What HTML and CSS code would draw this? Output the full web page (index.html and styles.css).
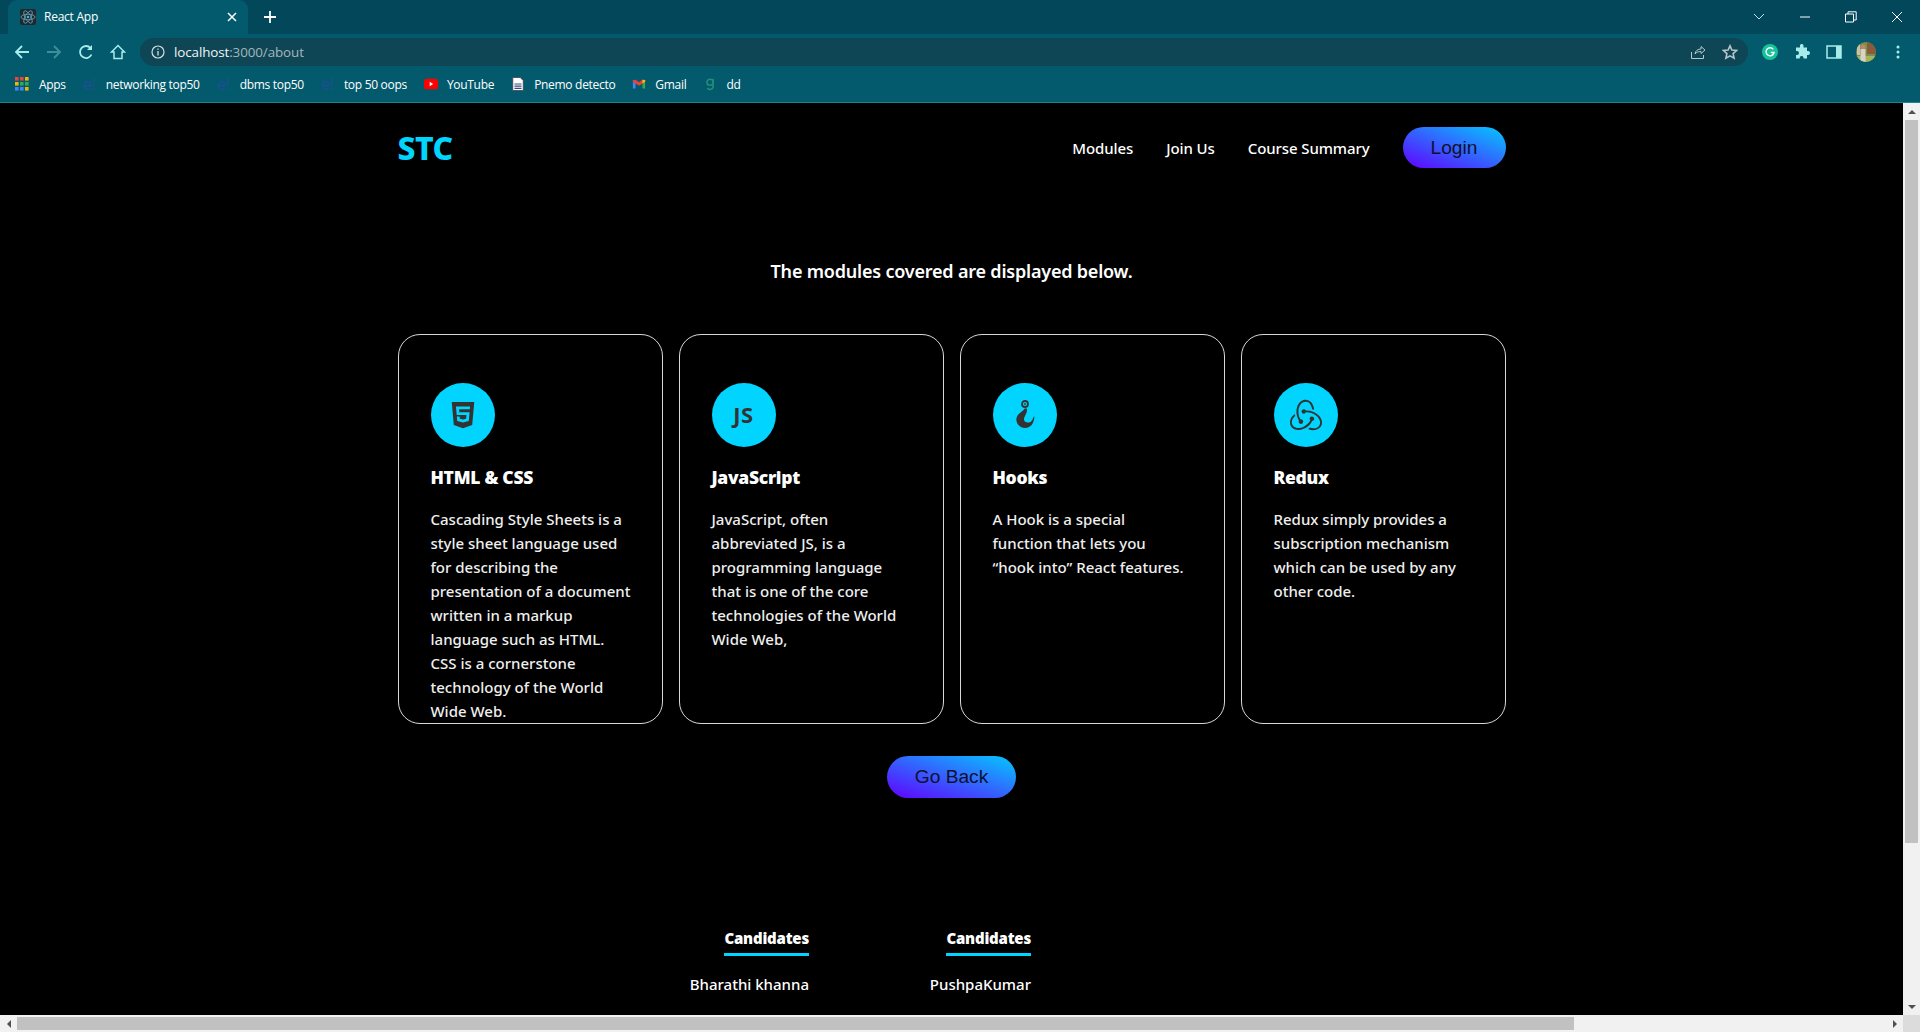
FILE: index.html
```html
<!DOCTYPE html>
<html lang="en">
<head>
<meta charset="utf-8">
<title>React App</title>
<link rel="stylesheet" href="styles.css">
</head>
<body>
<header class="browser">
  <div class="tabstrip">
    <div class="tab">
      <svg class="favicon" viewBox="0 0 16 16"><rect width="16" height="16" rx="2" fill="#20282c"/><g fill="none" stroke="#61a8c4" stroke-width=".8"><ellipse cx="8" cy="8" rx="7" ry="2.8"/><ellipse cx="8" cy="8" rx="7" ry="2.8" transform="rotate(60 8 8)"/><ellipse cx="8" cy="8" rx="7" ry="2.8" transform="rotate(120 8 8)"/></g><circle cx="8" cy="8" r="1.3" fill="#61a8c4"/></svg>
      <span class="tab-title">React App</span>
      <svg class="tab-close" viewBox="0 0 10 10"><path d="M1 1l8 8M9 1l-8 8" stroke="#fff" stroke-width="1.5"/></svg>
    </div>
    <svg class="new-tab" viewBox="0 0 12 12"><path d="M6 0v12M0 6h12" stroke="#fff" stroke-width="1.8"/></svg>
    <div class="window-controls">
      <svg class="wc chevron" viewBox="0 0 12 8"><path d="M1 1l5 5 5-5" fill="none" stroke="#c8dde2" stroke-width="1"/></svg>
      <svg class="wc" viewBox="0 0 12 12"><path d="M1 6h10" stroke="#fff" stroke-width="1"/></svg>
      <svg class="wc" viewBox="0 0 12 12"><path d="M.5 3h8v8h-8zM3 3V.8h8.2V9H8.500" fill="none" stroke="#fff" stroke-width="1"/></svg>
      <svg class="wc" viewBox="0 0 12 12"><path d="M1 1l10 10M11 1L1 11" stroke="#fff" stroke-width="1"/></svg>
    </div>
  </div>
  <div class="toolbar">
    <div class="nav-icons">
      <svg class="tool" viewBox="0 0 16 16"><path d="M15 8H2M8 2L2 8l6 6" fill="none" stroke="#a8ecea" stroke-width="1.8"/></svg>
      <svg class="tool" viewBox="0 0 16 16"><path d="M1 8h13M8 2l6 6-6 6" fill="none" stroke="#3f8f9b" stroke-width="1.8"/></svg>
      <svg class="tool" viewBox="0 0 16 16"><path d="M13.500 10.500A6 6 0 1 1 12.500 4" fill="none" stroke="#a8ecea" stroke-width="1.8"/><path d="M14 1v5H9z" fill="#a8ecea"/></svg>
      <svg class="tool" viewBox="0 0 16 16"><path d="M8 1.500L1.500 8H4v6.500h8V8h2.500z" fill="none" stroke="#a8ecea" stroke-width="1.500"/></svg>
    </div>
    <div class="omnibox">
      <svg class="info" viewBox="0 0 14 14"><circle cx="7" cy="7" r="6" fill="none" stroke="#d6dfe2" stroke-width="1.200"/><path d="M7 6v4.500M7 3.500v1.300" stroke="#d6dfe2" stroke-width="1.300"/></svg>
      <span class="url">localhost<span class="url-muted">:3000/about</span></span>
      <svg class="omni-right share" viewBox="0 0 16 16"><path d="M1.500 8v6.500h12V11M5 10c.5-3.500 3-5 6-5V2.500L15 6l-4 3.500V7.500C8.500 7.500 6.500 8 5 10z" fill="none" stroke="#b6c6ca" stroke-width="1"/></svg>
      <svg class="omni-right star" viewBox="0 0 16 16"><path d="M8 1.800l1.900 4.200 4.600.5-3.400 3.100 1 4.500L8 11.800 3.900 14.100l1-4.500L1.500 6.500 6.100 6z" fill="none" stroke="#b6c6ca" stroke-width="1.600"/></svg>
    </div>
    <div class="ext-icons">
      <svg class="tool" viewBox="0 0 16 16"><circle cx="8" cy="8" r="8" fill="#15c39a"/><path d="M11.300 5.400A4 4 0 1 0 12 8.500H8.800" fill="none" stroke="#fff" stroke-width="1.400"/></svg>
      <svg class="tool" viewBox="0 0 16 16"><path d="M6 1.500a1.800 1.800 0 0 1 3.500 0V3.500h3.500V7h1a2 2 0 0 1 0 4h-1v3.500H9.500v-1a1.900 1.900 0 0 0-3.700 0v1H2V11h1a2 2 0 0 0 0-4H2V3.500h4z" fill="#a8ecea"/></svg>
      <svg class="tool" viewBox="0 0 16 16"><path d="M1 2h14v12H1z" fill="none" stroke="#a8ecea" stroke-width="1.500"/><path d="M10 2h5v12h-5z" fill="#a8ecea"/></svg>
      <svg class="tool avatar" viewBox="0 0 20 20"><defs><clipPath id="av"><circle cx="10" cy="10" r="10"/></clipPath></defs><g clip-path="url(#av)"><rect width="20" height="20" fill="#7c8f4e"/><rect x="11" width="9" height="12" fill="#8b5a3a"/><rect y="14" width="20" height="6" fill="#a6b35e"/><circle cx="7" cy="5" r="2.500" fill="#b88a68"/><rect x="4.500" y="7" width="5" height="13" fill="#d9d3c6"/><rect x="1" width="3" height="13" fill="#c9c2a8"/></g></svg>
      <svg class="tool dots" viewBox="0 0 16 16"><circle cx="8" cy="3" r="1.500" fill="#a8ecea"/><circle cx="8" cy="8" r="1.500" fill="#a8ecea"/><circle cx="8" cy="13" r="1.500" fill="#a8ecea"/></svg>
    </div>
  </div>
  <nav class="bookmarks">
    <a class="bm bm-apps"><svg class="bm-icon" viewBox="0 0 14 14"><g><rect width="3.600" height="3.600" fill="#e8453c"/><rect x="5" width="3.600" height="3.600" fill="#e8453c"/><rect x="10" width="3.600" height="3.600" fill="#f4b400"/><rect y="5" width="3.600" height="3.600" fill="#f4b400"/><rect x="5" y="5" width="3.600" height="3.600" fill="#34a853"/><rect x="10" y="5" width="3.600" height="3.600" fill="#34a853"/><rect y="10" width="3.600" height="3.600" fill="#4285f4"/><rect x="5" y="10" width="3.600" height="3.600" fill="#4285f4"/><rect x="10" y="10" width="3.600" height="3.600" fill="#f4b400"/></g></svg>Apps</a>
    <a class="bm"><span class="bm-e">e!</span>networking top50</a>
    <a class="bm"><span class="bm-e">e!</span>dbms top50</a>
    <a class="bm"><span class="bm-e">e!</span>top 50 oops</a>
    <a class="bm"><svg class="bm-icon" viewBox="0 0 16 16"><rect y="2" width="16" height="12" rx="3" fill="#f00"/><path d="M6.500 5.500v5l4-2.500z" fill="#fff"/></svg>YouTube</a>
    <a class="bm"><svg class="bm-icon" viewBox="0 0 16 16"><path d="M2 .5h8.500L14 4v11.500H2z" fill="#fff" stroke="#445"/><path d="M4 8h8M4 10.500h8M4 13h8" stroke="#3a4a80" stroke-width="1.300"/></svg>Pnemo detecto</a>
    <a class="bm"><svg class="bm-icon" viewBox="0 0 16 16"><path d="M1 4v9h3V7z" fill="#4285f4"/><path d="M15 4v9h-3V7z" fill="#34a853"/><path d="M1 3.500L4 3l4 3 4-3 3 .5v2L8 10 1 5.500z" fill="#ea4335"/><path d="M12 3l3 .5v2l-3 2z" fill="#fbbc04"/></svg>Gmail</a>
    <a class="bm"><svg class="bm-icon" viewBox="0 0 16 16"><circle cx="8" cy="6" r="3.500" fill="none" stroke="#1f8f78" stroke-width="1.800"/><path d="M11.500 2v8.500a3.500 3.500 0 0 1-6.500 2" fill="none" stroke="#1f8f78" stroke-width="1.800"/></svg>dd</a>
  </nav>
</header>

<div class="window-body">
  <div class="viewport">
    <main class="page">
      <header class="site-nav">
        <div class="logo">STC</div>
        <ul class="nav-links">
          <li>Modules</li>
          <li>Join Us</li>
          <li>Course Summary</li>
        </ul>
        <button class="pill pill-login">Login</button>
      </header>

      <h2 class="lead">The modules covered are displayed below.</h2>

      <section class="cards">
        <article class="card">
          <div class="badge">
            <svg class="icon-html" viewBox="0 0 384 512"><path d="M0 32l34.900 395.800L191.500 480l157.600-52.200L384 32H0zm308.200 127.900H124.400l4.100 49.400h175.600l-13.600 148.400-97.900 27v.3h-1.100l-98.700-27.300-6-75.800h47.700L138 320l53.500 14.500 53.700-14.500 6-62.200H84.300L71.500 112.200h241.100l-4.400 47.700z"/></svg>
          </div>
          <h3 class="card-title">HTML &amp; CSS</h3>
          <p class="card-text">Cascading Style Sheets is a<br>style sheet language used<br>for describing the<br>presentation of a document<br>written in a markup<br>language such as HTML.<br>CSS is a cornerstone<br>technology of the World<br>Wide Web.</p>
        </article>
        <article class="card">
          <div class="badge"><span class="badge-js">JS</span></div>
          <h3 class="card-title">JavaScript</h3>
          <p class="card-text">JavaScript, often<br>abbreviated JS, is a<br>programming language<br>that is one of the core<br>technologies of the World<br>Wide Web,</p>
        </article>
        <article class="card">
          <div class="badge">
            <svg class="icon-hook" viewBox="0 0 20 30"><circle cx="10" cy="4" r="3" fill="none" stroke="#333" stroke-width="1.800"/><circle cx="10" cy="4" r=".9" fill="#333"/><path d="M9.500 8.500C9 11 3 12.500 1.500 18c-1 4.500 2.500 10 8.500 10 6 0 9-5 9.500-11.500l-1 .5c-.8 2.800-1.500 3.500-3 5-3 1.500-6.500 0-6.500-2.500 0-3.500 3.500-5.500 3-11z" fill="#333"/></svg>
          </div>
          <h3 class="card-title">Hooks</h3>
          <p class="card-text">A Hook is a special<br>function that lets you<br>“hook into” React features.</p>
        </article>
        <article class="card">
          <div class="badge">
            <svg class="icon-redux" viewBox="0 0 24 24"><path d="M16.634 16.504c.87-.075 1.543-.84 1.500-1.754-.047-.914-.796-1.648-1.709-1.648h-.061a1.710 1.710 0 00-1.648 1.769c.03.479.226.869.494 1.153-1.048 2.038-2.621 3.536-5.005 4.795-1.603.838-3.296 1.154-4.944.930-1.378-.195-2.456-.810-3.116-1.799-.988-1.499-1.078-3.116-.255-4.734.600-1.170 1.499-2.023 2.099-2.443a9.960 9.960 0 01-.420-1.543C-.868 14.408-.416 18.752.932 20.805c1.004 1.498 3.057 2.456 5.304 2.456.600 0 1.230-.044 1.843-.194 3.897-.749 6.848-3.086 8.541-6.532zm5.348-3.746c-2.320-2.728-5.738-4.226-9.634-4.226h-.510c-.253-.554-.837-.899-1.498-.899h-.045c-.943 0-1.678.810-1.647 1.753.03.898.794 1.648 1.708 1.648h.074a1.690 1.690 0 001.499-1.049h.555c2.309 0 4.495.674 6.488 1.992 1.527 1.005 2.622 2.323 3.237 3.897.538 1.288.509 2.547-.045 3.597-.855 1.647-2.294 2.517-4.196 2.517-1.199 0-2.367-.375-2.967-.644-.360.298-.960.793-1.394 1.093 1.318.598 2.652.943 3.940.943 2.922 0 5.094-1.647 5.919-3.236.898-1.798.824-4.824-1.470-7.416zM6.490 17.042c.03.899.793 1.648 1.708 1.648h.060a1.688 1.688 0 001.648-1.768c0-.900-.779-1.647-1.693-1.647h-.060c-.060 0-.150 0-.226.029-1.243-2.098-1.768-4.347-1.572-6.772.120-1.828.720-3.417 1.797-4.735.900-1.124 2.593-1.680 3.747-1.708 3.236-.061 4.585 3.971 4.689 5.574l1.498.450C17.741 3.197 14.686.620 11.764.620 9.020.620 6.490 2.613 5.470 5.535 4.077 9.430 4.991 13.177 6.700 16.174c-.150.195-.240.539-.210.868z"/></svg>
          </div>
          <h3 class="card-title">Redux</h3>
          <p class="card-text">Redux simply provides a<br>subscription mechanism<br>which can be used by any<br>other code.</p>
        </article>
      </section>

      <div class="back-row"><button class="pill pill-back">Go Back</button></div>

      <footer class="candidates">
        <div class="cand-col cand-a">
          <h4 class="cand-head">Candidates</h4>
          <p class="cand-name">Bharathi khanna</p>
        </div>
        <div class="cand-col cand-b">
          <h4 class="cand-head">Candidates</h4>
          <p class="cand-name">PushpaKumar</p>
        </div>
      </footer>
    </main>
  </div>
  <div class="vscroll">
    <span class="sb-btn"><i class="arrow arrow-up"></i></span>
    <span class="vthumb"></span>
    <span class="sb-fill"></span>
    <span class="sb-btn"><i class="arrow arrow-down"></i></span>
  </div>
</div>
<div class="hscroll">
  <span class="sb-btn"><i class="arrow arrow-left"></i></span>
  <span class="hthumb"></span>
  <span class="sb-fill"></span>
  <span class="sb-btn"><i class="arrow arrow-right"></i></span>
  <span class="sb-corner"></span>
</div>
</body>
</html>
```

FILE: styles.css
```css
* { box-sizing: border-box; }
html, body { margin: 0; height: 100%; }
body {
  display: flex;
  flex-direction: column;
  height: 100vh;
  overflow: hidden;
  background: #000;
  color: #fff;
  font-family: "Noto Sans", sans-serif;
}

/* browser chrome */
.browser {
  flex: none;
  height: 103px;
  background: #035a6d;
  border-bottom: 1px solid #1b8290;
  font-family: "Open Sans", sans-serif;
}
.tabstrip {
  display: flex;
  align-items: center;
  height: 34px;
  padding-left: 8px;
  background: #03475a;
}
.tab {
  display: flex;
  align-items: center;
  width: 240px;
  height: 34px;
  padding: 0 11px 0 12px;
  background: #035a6d;
  border-radius: 9px 9px 0 0;
}
.favicon { width: 16px; height: 16px; flex: none; }
.tab-title { flex: 1; margin: 0 0 2px 8px; font-size: 12px; letter-spacing: -.25px; color: #fff; }
.tab-close { width: 10px; height: 10px; flex: none; }
.new-tab { width: 12px; height: 12px; margin-left: 16px; flex: none; }
.window-controls {
  display: flex;
  align-items: center;
  gap: 34px;
  margin-left: auto;
  padding-right: 17px;
}
.wc { width: 12px; height: 12px; display: block; }
.toolbar {
  display: flex;
  align-items: center;
  height: 36px;
}
.nav-icons {
  display: flex;
  gap: 16px;
  padding-left: 14px;
}
.tool { width: 16px; height: 16px; display: block; flex: none; }
.omnibox {
  display: flex;
  align-items: center;
  flex: none;
  width: 1608px;
  height: 28px;
  margin-left: 14px;
  padding: 0 10px 0 11px;
  background: #0f4656;
  border-radius: 14px;
}
.info { width: 14px; height: 14px; flex: none; }
.url { margin-left: 9px; font-size: 13.400px; letter-spacing: -.1px; color: #eef4f5; }
.url-muted { color: #a2b6bc; }
.omni-right { width: 16px; height: 16px; flex: none; }
.share { margin-left: auto; }
.star { margin-left: 16px; }
.ext-icons {
  display: flex;
  align-items: center;
  gap: 16px;
  margin-left: 14px;
}
.avatar { width: 20px; height: 20px; margin: 0 -2px; }
.bookmarks {
  display: flex;
  align-items: center;
  height: 32px;
  padding: 0 0 4px 15px;
  gap: 17px;
}
.bm { display: flex; align-items: center; gap: 9px; font-size: 12px; letter-spacing: -.3px; color: #fff; white-space: nowrap; }
.bm-icon { width: 14px; height: 14px; flex: none; }
.bm-apps { gap: 10px; }
.bm-e { width: 14px; font-size: 16px; line-height: 16px; color: #1c4f94; }

/* layout */
.window-body { flex: 1; min-height: 0; display: flex; }
.viewport { flex: 1; min-width: 0; overflow: hidden; }
.page {
  width: 1108px;
  margin: 0 auto;
  padding-top: 24px;
}

/* site nav */
.site-nav { display: flex; align-items: center; height: 41px; }
.logo {
  font-size: 32px;
  line-height: 41px;
  font-weight: 800;
  color: #00d4ff;
  letter-spacing: -.5px;
}
.nav-links {
  display: flex;
  gap: 33px;
  margin: 0 33px 0 auto;
  padding: 0;
  list-style: none;
  font-size: 15px;
  font-weight: 500;
  letter-spacing: -.1px;
}
.pill {
  display: block;
  border: 0;
  border-radius: 21px;
  height: 41px;
  padding: 0;
  background: linear-gradient(to top right, #5a10ff 8%, #04c8ff);
  font-family: "Liberation Sans", sans-serif;
  font-size: 19.200px;
  color: #10102e;
}
.pill-login { width: 103px; }
.pill-back { width: 129px; height: 42px; }

.lead {
  margin: 89px 0 0;
  height: 33px;
  text-align: center;
  font-size: 18px;
  line-height: 28px;
  font-weight: 600;
  letter-spacing: -.2px;
}

/* cards */
.cards {
  display: grid;
  grid-template-columns: repeat(4, 1fr);
  gap: 16px;
  margin-top: 44px;
}
.card {
  height: 390px;
  padding: 48px 32px 0;
  border: 1px solid #d8d8d8;
  border-radius: 22px;
  overflow: hidden;
}
.badge {
  display: flex;
  align-items: center;
  justify-content: center;
  width: 64px;
  height: 64px;
  border-radius: 50%;
  background: #00d4ff;
}
.icon-html { width: 26px; height: 30px; fill: #333; }
.icon-hook { width: 20px; height: 30px; }
.icon-redux { width: 32px; height: 32px; fill: #333; }
.badge-js { padding-bottom: 2px; font-size: 22px; font-weight: 700; color: #333; letter-spacing: .5px; }
.card-title {
  margin: 17px 0 0;
  font-size: 17.500px;
  line-height: 26px;
  font-weight: 900;
  letter-spacing: -.3px;
}
.card-text {
  margin: 17px 0 0;
  font-size: 15px;
  line-height: 24px;
  font-weight: 500;
  color: #efefef;
  white-space: nowrap;
}

.back-row { display: flex; justify-content: center; margin-top: 32px; }

/* candidates */
.candidates { display: flex; margin-top: 129px; }
.cand-col { display: flex; flex-direction: column; align-items: flex-end; }
.cand-a { width: 411.500px; }
.cand-b { width: 222px; }
.cand-head {
  margin: 0;
  padding-bottom: 4px;
  border-bottom: 3px solid #00d4ff;
  font-size: 15px;
  line-height: 22px;
  font-weight: 900;
  letter-spacing: -.2px;
}
.cand-name {
  margin: 17px 0 0;
  font-size: 15px;
  line-height: 22px;
  font-weight: 500;
}

/* scrollbars */
.vscroll {
  flex: none;
  display: flex;
  flex-direction: column;
  align-items: center;
  width: 17px;
  background: #f1f1f1;
}
.vthumb { flex: none; width: 13px; height: 723px; background: #c1c1c1; }
.hscroll {
  flex: none;
  display: flex;
  align-items: center;
  height: 17px;
  background: #f1f1f1;
}
.hthumb { flex: none; width: 1557px; height: 13px; background: #c1c1c1; }
.sb-fill { flex: 1; }
.sb-btn { flex: none; display: flex; align-items: center; justify-content: center; width: 17px; height: 17px; }
.sb-corner { flex: none; width: 17px; height: 17px; background: #dcdcdc; }
.arrow { display: block; width: 0; height: 0; border-style: solid; border-color: transparent; }
.arrow-up { border-width: 0 4px 4px; border-bottom-color: #505050; }
.arrow-down { border-width: 4px 4px 0; border-top-color: #505050; }
.arrow-left { border-width: 4px 4px 4px 0; border-right-color: #505050; }
.arrow-right { border-width: 4px 0 4px 4px; border-left-color: #505050; }
```
